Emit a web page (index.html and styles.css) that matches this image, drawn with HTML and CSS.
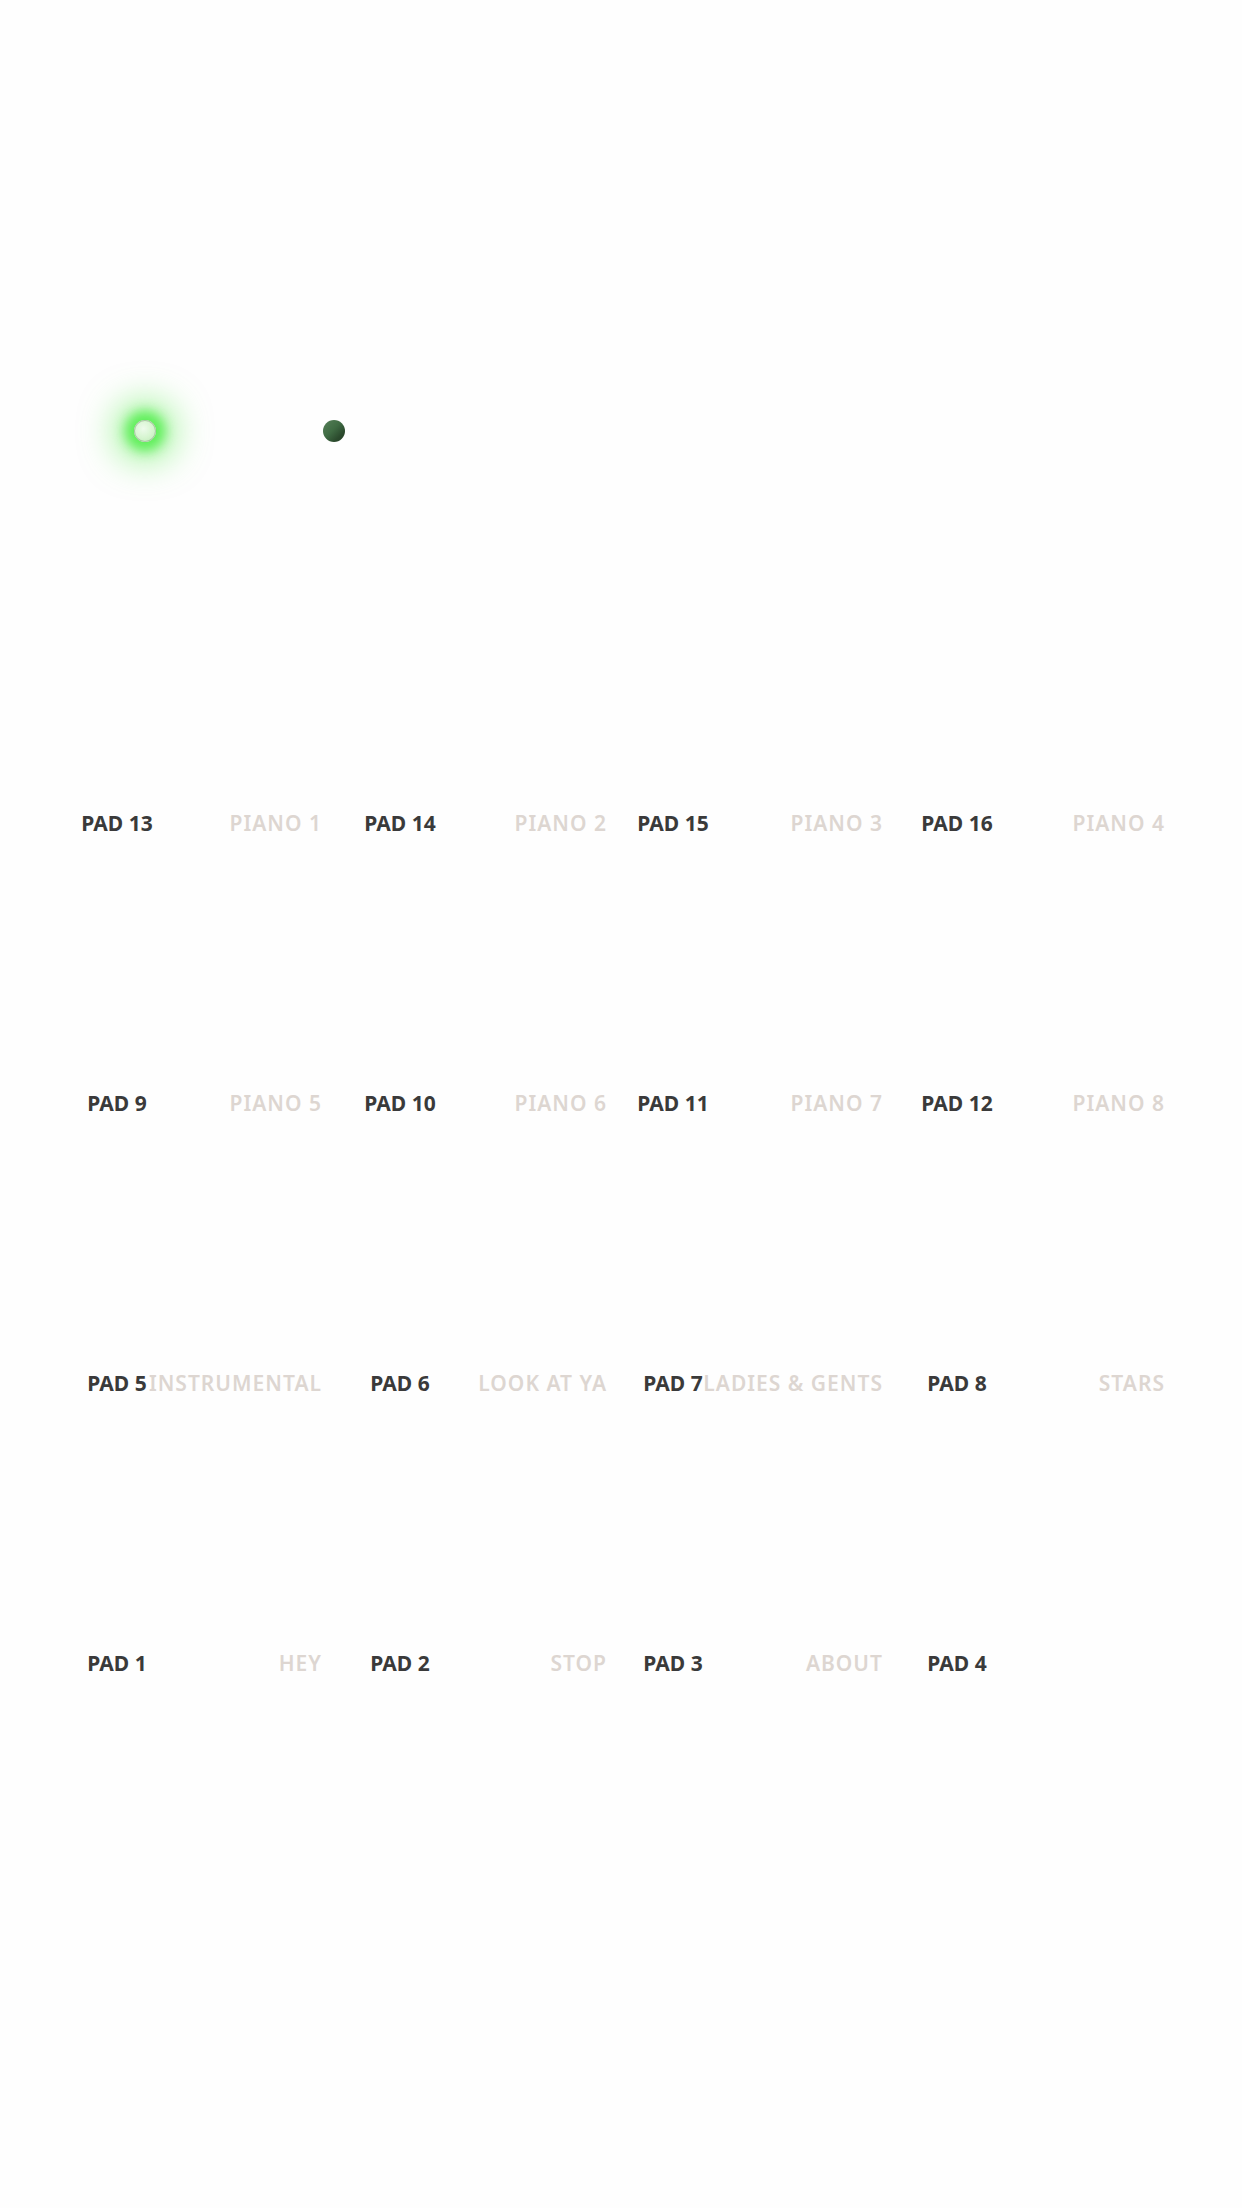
FILE: index.html
```html
<!DOCTYPE html>
<html>
<head>
<meta charset="utf-8">
<title>Pads</title>
<link rel="stylesheet" href="styles.css">
</head>
<body>
<div class="leds">
  <span class="led led-on"></span>
  <span class="led led-off"></span>
</div>
<div class="grid">
  <div class="row">
    <div class="cell"><span class="pad">PAD 13</span><span class="name">PIANO 1</span></div>
    <div class="cell"><span class="pad">PAD 14</span><span class="name">PIANO 2</span></div>
    <div class="cell"><span class="pad">PAD 15</span><span class="name">PIANO 3</span></div>
    <div class="cell"><span class="pad">PAD 16</span><span class="name">PIANO 4</span></div>
  </div>
  <div class="row">
    <div class="cell"><span class="pad">PAD 9</span><span class="name">PIANO 5</span></div>
    <div class="cell"><span class="pad">PAD 10</span><span class="name">PIANO 6</span></div>
    <div class="cell"><span class="pad">PAD 11</span><span class="name">PIANO 7</span></div>
    <div class="cell"><span class="pad">PAD 12</span><span class="name">PIANO 8</span></div>
  </div>
  <div class="row">
    <div class="cell"><span class="pad">PAD 5</span><span class="name">INSTRUMENTAL</span></div>
    <div class="cell"><span class="pad">PAD 6</span><span class="name">LOOK AT YA</span></div>
    <div class="cell"><span class="pad">PAD 7</span><span class="name">LADIES &amp; GENTS</span></div>
    <div class="cell"><span class="pad">PAD 8</span><span class="name">STARS</span></div>
  </div>
  <div class="row">
    <div class="cell"><span class="pad">PAD 1</span><span class="name">HEY</span></div>
    <div class="cell"><span class="pad">PAD 2</span><span class="name">STOP</span></div>
    <div class="cell"><span class="pad">PAD 3</span><span class="name">ABOUT</span></div>
    <div class="cell"><span class="pad">PAD 4</span><span class="name"></span></div>
  </div>
</div>
</body>
</html>
```

FILE: styles.css
```css
html, body {
  margin: 0;
  padding: 0;
  background: #fefefe;
}
body {
  width: 1242px;
  height: 2208px;
  overflow: hidden;
  font-family: "Noto Sans", "Liberation Sans", sans-serif;
}
.leds {
  display: flex;
  align-items: center;
  padding: 420px 0 0 134px;
  gap: 167px;
  height: 22px;
}
.led {
  display: block;
  width: 22px;
  height: 22px;
  border-radius: 50%;
  box-sizing: border-box;
}
.led-on {
  background: radial-gradient(circle at 42% 38%, #eefbec 0%, #d6f5d0 55%, #bfe8b7 100%);
  border: 1px solid rgba(120, 150, 115, 0.45);
  box-shadow: 0 0 12px 9px rgba(90, 238, 84, 0.95), 0 0 32px 22px rgba(110, 240, 100, 0.5);
}
.led-off {
  background: linear-gradient(135deg, #567f58 0%, #3f6b43 45%, #2b4a2d 75%, #223c24 100%);
}
.grid {
  margin-top: 369px;
  padding-left: 57px;
}
.row {
  display: grid;
  grid-template-columns: 283px 273px 284px 280px;
  height: 280px;
  align-items: start;
}
.cell {
  display: flex;
  font-size: 21px;
  line-height: 24px;
}
.pad {
  flex: none;
  width: 120px;
  text-align: center;
  font-weight: 700;
  color: #3a3a3a;
  white-space: nowrap;
}
.name {
  flex: none;
  display: flex;
  justify-content: flex-end;
  width: 145px;
  font-weight: 600;
  color: #ddd6d1;
  letter-spacing: 1px;
  white-space: nowrap;
}
.cell:nth-child(2) .name {
  width: 147px;
}
.cell:nth-child(3) .name {
  width: 150px;
}
.cell:nth-child(4) .name {
  width: 148px;
}
```
